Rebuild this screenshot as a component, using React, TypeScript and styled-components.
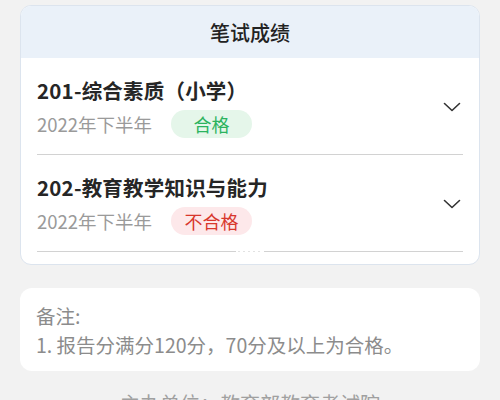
import React from 'react';
import styled, { createGlobalStyle } from 'styled-components';

const GlobalStyle = createGlobalStyle`
	body {
		margin: 0;
		background: #f2f2f2;
		font-family: "Noto Sans CJK SC", "Noto Sans", sans-serif;
	}
`;

const Page = styled.div`
	padding: 5px 20px 0;
	height: 400px;
	overflow: hidden;
	box-sizing: border-box;
`;

const Card = styled.div`
	background: #fff;
	border: 1px solid #dce4ee;
	border-radius: 11px;
	overflow: hidden;
	padding-bottom: 12px;
`;

const Header = styled.div`
	background: #eaf1f9;
	height: 52px;
	display: flex;
	align-items: center;
	justify-content: center;
	font-size: 20px;
	font-weight: 500;
	color: #222;
`;

const List = styled.div`
	padding: 0 16px;
`;

const Row = styled.div<{ last?: boolean }>`
	display: flex;
	align-items: center;
	padding: 18px 0 16px;
	border-bottom: ${(p) => (p.last ? 'none' : '1px solid #d2d2d2')};
`;

const Info = styled.div`
	flex: 1;
	display: flex;
	flex-direction: column;
	gap: 6px;
`;

const Title = styled.div`
	font-size: 20.5px;
	font-weight: 700;
	line-height: 28px;
	color: #262626;
	letter-spacing: 0.2px;
`;

const Meta = styled.div`
	display: flex;
	align-items: center;
	gap: 19px;
	font-size: 18.5px;
	color: #9a9a9a;
`;

const Badge = styled.span<{ pass: boolean }>`
	width: 81px;
	height: 28px;
	border-radius: 14px;
	display: flex;
	align-items: center;
	justify-content: center;
	font-size: 18px;
	color: ${(p) => (p.pass ? '#2bb35e' : '#d8372d')};
	background: ${(p) => (p.pass ? '#e5f6ea' : '#fde8ea')};
`;

const Chevron = styled.svg`
	width: 18px;
	height: 10px;
	margin-right: 2px;
`;

const DottedDivider = styled.div`
	display: flex;
	align-items: center;
	gap: 2px;
`;

const Line = styled.div`
	flex: 1;
	height: 1px;
	background: #d2d2d2;
`;

const Dots = styled.div`
	width: 24px;
	height: 1px;
	background: repeating-linear-gradient(90deg, #e2e2e2 0 2px, transparent 2px 5px);
`;

const Note = styled.div`
	margin-top: 23px;
	background: #fff;
	border-radius: 12px;
	padding: 14px 16px 12px;
	font-size: 19.5px;
	line-height: 28.5px;
	color: #8c8c8c;
`;

const Footer = styled.div`
	margin-top: 19px;
	text-align: center;
	font-size: 20px;
	line-height: 28px;
	color: #a0a0a0;
`;

const results = [
	{ name: '201-综合素质（小学）', term: '2022年下半年', pass: true },
	{ name: '202-教育教学知识与能力', term: '2022年下半年', pass: false },
];

function ChevronDown() {
	return (
		<Chevron viewBox="0 0 18 10" fill="none">
			<path d="M1.5 1.5 L9 8.5 L16.5 1.5" stroke="#333" strokeWidth="1.6" strokeLinecap="round" strokeLinejoin="round" />
		</Chevron>
	);
}

export default function App() {
	return (
		<Page>
			<GlobalStyle />
			<Card>
				<Header>笔试成绩</Header>
				<List>
					{results.map((r, i) => (
						<Row key={r.name} last={i === results.length - 1}>
							<Info>
								<Title>{r.name}</Title>
								<Meta>
									<span>{r.term}</span>
									<Badge pass={r.pass}>{r.pass ? '合格' : '不合格'}</Badge>
								</Meta>
							</Info>
							<ChevronDown />
						</Row>
					))}
					<DottedDivider>
						<Line />
						<Dots />
						<Line />
					</DottedDivider>
				</List>
			</Card>
			<Note>
				<div>备注:</div>
				<div>1. 报告分满分120分，70分及以上为合格。</div>
			</Note>
			<Footer>主办单位：教育部教育考试院</Footer>
		</Page>
	);
}
